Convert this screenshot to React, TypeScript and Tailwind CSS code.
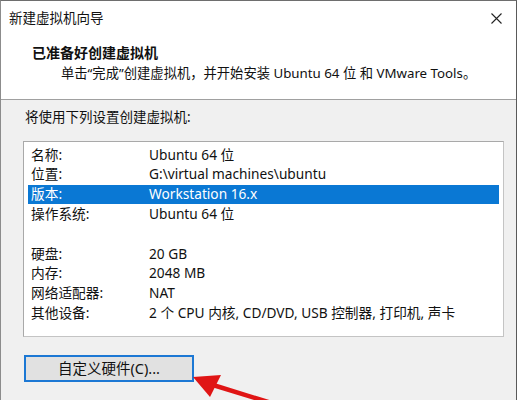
const font = "font-['Noto_Sans','Noto_Sans_CJK_SC',sans-serif]";

const rows: ([string, string] | null)[] = [
  ['名称:', 'Ubuntu 64 位'],
  ['位置:', 'G:\\virtual machines\\ubuntu'],
  ['版本:', 'Workstation 16.x'],
  ['操作系统:', 'Ubuntu 64 位'],
  null,
  ['硬盘:', '20 GB'],
  ['内存:', '2048 MB'],
  ['网络适配器:', 'NAT'],
  ['其他设备:', '2 个 CPU 内核, CD/DVD, USB 控制器, 打印机, 声卡'],
];

export default function App() {
  return (
    <div
      className={`relative h-[400px] w-[517px] overflow-hidden border-x border-t border-l-[#8c8c8c] border-r-[#5a5a5a] border-t-[#6e6e6e] bg-white text-[#111] ${font}`}
    >
      {/* title bar */}
      <div className="flex h-[34px] items-center justify-between pl-[8px] pr-[14px]">
        <span className="text-[13.5px]">新建虚拟机向导</span>
        <svg width="11" height="11" viewBox="0 0 11 11" className="text-[#222]">
          <path d="M0.5 0.5 L10.5 10.5 M10.5 0.5 L0.5 10.5" stroke="currentColor" strokeWidth="1.1" />
        </svg>
      </div>

      {/* header */}
      <div className="h-[65px] border-b border-[#a0a0a0] pl-[31px] pt-[9px]">
        <p className="text-[14px] font-bold leading-[18px]">已准备好创建虚拟机</p>
        <p className="pl-[29px] pt-[2px] text-[13.3px] leading-[18px]">
          单击“完成”创建虚拟机，并开始安装 Ubuntu 64 位 和 VMware Tools。
        </p>
      </div>

      {/* body */}
      <div className="h-full bg-[#f0f0f0] pl-[22px] pt-[8px]">
        <p className="pl-[2px] text-[13.5px] leading-[18px]">将使用下列设置创建虚拟机:</p>
        <div className="mt-[15px] h-[196px] w-[481px] border border-[#a9a9a9] border-r-[#c4c4c4] border-b-[#c4c4c4] bg-white px-[4px] pt-[3px]">
          {rows.map((r, i) =>
            r ? (
              <div
                key={i}
                className={`flex h-[19.8px] items-center pl-[3px] text-[13.7px] ${
                  i === 2 ? 'bg-[#0a78d4] text-white' : ''
                }`}
              >
                <span className="w-[118px] shrink-0">{r[0]}</span>
                <span className="whitespace-nowrap">{r[1]}</span>
              </div>
            ) : (
              <div key={i} className="h-[19.8px]" />
            ),
          )}
        </div>

        <button className="mt-[18px] ml-[1px] h-[27px] w-[170px] border-2 border-[#1c78d4] bg-[#e1e1e1] text-[14.5px] text-[#111]">
          自定义硬件(C)...
        </button>
      </div>

      {/* red arrow */}
      <svg className="absolute left-0 top-0" width="517" height="400" viewBox="0 0 517 400">
        <line x1="212" y1="384" x2="290" y2="408" stroke="#e01515" strokeWidth="4.5" />
        <polygon points="192,376 220,374 209,396" fill="#e01515" />
      </svg>
    </div>
  );
}
